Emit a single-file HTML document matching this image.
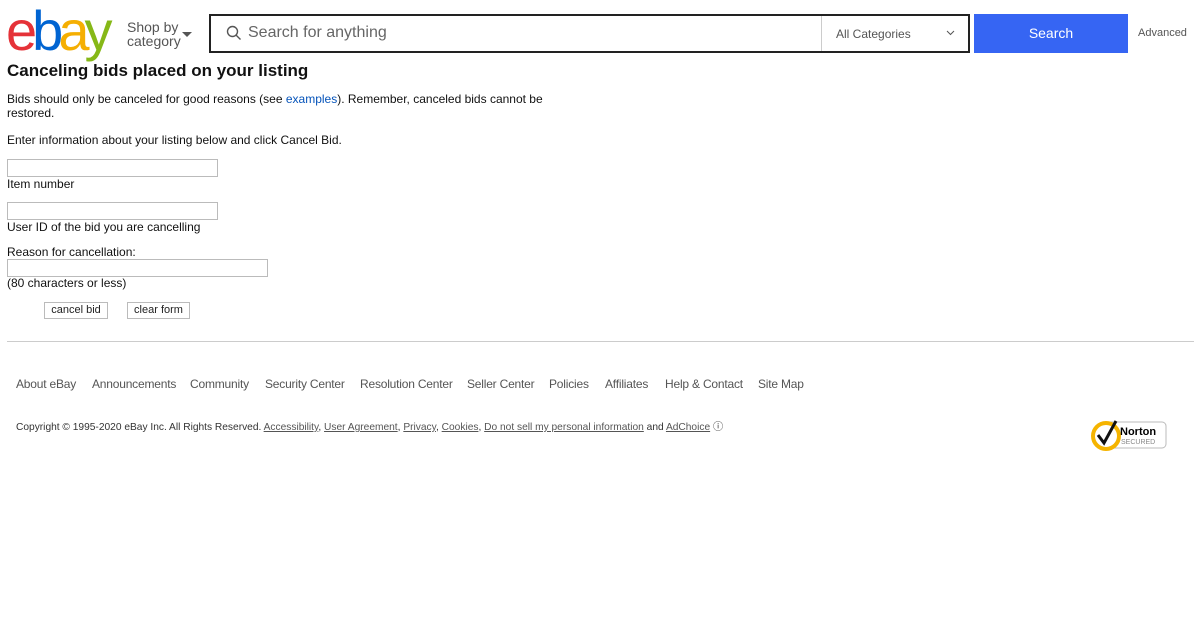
<!DOCTYPE html>
<html><head><style>
*{margin:0;padding:0;box-sizing:border-box}
body{width:1200px;height:630px;background:#fff;font-family:"Liberation Sans",Arial,sans-serif;color:#111;position:relative;overflow:hidden}
.a{position:absolute;white-space:nowrap}
.logo{left:6px;font-size:56px;letter-spacing:-5px;font-weight:normal;line-height:56px}
.inp{position:absolute;border:1px solid #bbb;background:#fff;height:18px}
.btn{position:absolute;border:1px solid #bbb;background:#fff;font-size:11px;height:17px;line-height:15px;text-align:center;color:#222}
.f{font-size:12px;color:#555;letter-spacing:-0.2px}
.c{font-size:10.2px;color:#333}
.c u{color:#555}
</style></head><body>
<div class="a logo" style="top:3px;"><span style="color:#e53238">e</span><span style="color:#0064d2">b</span><span style="color:#f5af02">a</span><span style="color:#86b817">y</span></div>
<div class="a" style="left:127px;top:20px;font-size:14px;color:#555;line-height:14px">Shop by<br>category</div>
<div class="a" style="left:182px;top:32px;width:0;height:0;border-left:5px solid transparent;border-right:5px solid transparent;border-top:5px solid #555"></div>
<div class="a" style="left:209px;top:14px;width:761px;height:39px;border:2px solid #222"></div>
<svg class="a" style="left:226px;top:25px" width="16" height="16" viewBox="0 0 16 16"><circle cx="6.5" cy="6.5" r="5" fill="none" stroke="#555" stroke-width="1.4"/><path d="M10.2 10.2L14.5 14.5" stroke="#555" stroke-width="1.4"/></svg>
<div class="a" style="left:248px;top:24px;font-size:16px;color:#666">Search for anything</div>
<div class="a" style="left:821px;top:16px;width:1px;height:35px;background:#ccc"></div>
<div class="a" style="left:836px;top:27px;font-size:12px;color:#555">All Categories</div>
<svg class="a" style="left:946px;top:30px" width="9" height="6"><path d="M1 1l3.5 3.5L8 1" fill="none" stroke="#555"/></svg>
<div class="a" style="left:974px;top:14px;width:154px;height:39px;background:#3665f3;border:1px solid #3665f3;color:#fff;font-size:14px;text-align:center;line-height:37px">Search</div>
<div class="a" style="left:1138px;top:27px;font-size:11px;color:#555">Advanced</div>
<div class="a" style="left:7px;top:61px;font-size:17px;font-weight:bold">Canceling bids placed on your listing</div>
<div class="a" style="left:7px;top:93px;font-size:12px;line-height:13.5px">Bids should only be canceled for good reasons (see <span style="color:#0654ba">examples</span>). Remember, canceled bids cannot be<br>restored.</div>
<div class="a" style="left:7px;top:133px;font-size:12px">Enter information about your listing below and click Cancel Bid.</div>
<div class="inp" style="left:7px;top:159px;width:211px"></div>
<div class="a" style="left:7px;top:177px;font-size:12px">Item number</div>
<div class="inp" style="left:7px;top:202px;width:211px"></div>
<div class="a" style="left:7px;top:220px;font-size:12px">User ID of the bid you are cancelling</div>
<div class="a" style="left:7px;top:245px;font-size:12px">Reason for cancellation:</div>
<div class="inp" style="left:7px;top:259px;width:261px"></div>
<div class="a" style="left:7px;top:276px;font-size:12px">(80 characters or less)</div>
<div class="btn" style="left:44px;top:302px;width:64px">cancel bid</div>
<div class="btn" style="left:127px;top:302px;width:63px">clear form</div>
<div class="a" style="left:7px;top:341px;width:1187px;height:1px;background:#ccc"></div>
<div class="a f" style="left:16px;top:377px">About eBay</div>
<div class="a f" style="left:92px;top:377px">Announcements</div>
<div class="a f" style="left:190px;top:377px">Community</div>
<div class="a f" style="left:265px;top:377px">Security Center</div>
<div class="a f" style="left:360px;top:377px">Resolution Center</div>
<div class="a f" style="left:467px;top:377px">Seller Center</div>
<div class="a f" style="left:549px;top:377px">Policies</div>
<div class="a f" style="left:605px;top:377px">Affiliates</div>
<div class="a f" style="left:665px;top:377px">Help &amp; Contact</div>
<div class="a f" style="left:758px;top:377px">Site Map</div>
<div class="a c" style="left:16px;top:418px">Copyright © 1995-2020 eBay Inc. All Rights Reserved. <u>Accessibility</u>, <u>User Agreement</u>, <u>Privacy</u>, <u>Cookies</u>, <u>Do not sell my personal information</u> and <u>AdChoice</u> ⓘ</div>
<svg class="a" style="left:1090px;top:418px" width="78" height="34" viewBox="0 0 78 34"><rect x="14" y="4" width="62" height="26" rx="4" fill="#fff" stroke="#bbb"/><circle cx="16" cy="18" r="13" fill="#fff" stroke="#f5b400" stroke-width="4"/><path d="M8 17l6 8L26 3" fill="none" stroke="#111" stroke-width="3"/><text x="30" y="17" font-size="11" font-weight="bold" font-family="Liberation Sans">Norton</text><text x="31" y="26" font-size="7" fill="#888" font-family="Liberation Sans">SECURED</text></svg>
</body></html>
